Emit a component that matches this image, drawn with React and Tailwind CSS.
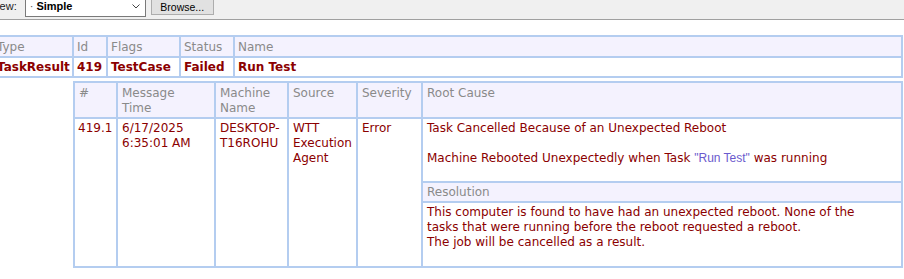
import React from "react";

const line = "bg-[#b4cdf0]";
const head = "bg-[#f4f2fe] text-[#8a8a8a]";
const cell = "bg-white text-[#8b0000]";

const taskHeaders = ["Type", "Id", "Flags", "Status", "Name"];
const taskValues = ["TaskResult", "419", "TestCase", "Failed", "Run Test"];

const msgHeaders = ["#", ["Message", "Time"], ["Machine", "Name"], "Source", "Severity", "Root Cause"];

const App = () => {
  return (
    <div className="w-[904px] h-[279px] overflow-hidden bg-white">
      {/* toolbar */}
      <div className="h-[20px] flex items-start bg-[#f0f0f0] border-b border-[#a0a0a0] font-['Liberation_Sans',Arial,sans-serif]">
        <div className="flex items-start -mt-[5px]">
          <span className="-ml-[10px] mt-[4px] text-[11px] leading-[14px] text-[#222]">View:</span>
          <div className="ml-[8px] w-[121px] h-[22px] bg-white border border-[#7a7a7a] flex items-center justify-between pl-[4px] pr-[5px]">
            <span className="text-[11px] font-bold text-black">
              <span className="font-normal text-[#555] mr-[3px]">·</span>Simple
            </span>
            <svg width="8" height="5" viewBox="0 0 8 5" className="mt-[1px]">
              <path d="M0.5 0.5 L4 4 L7.5 0.5" fill="none" stroke="#444" strokeWidth="1" />
            </svg>
          </div>
          <button
            type="button"
            className="ml-[5px] w-[63px] h-[20px] pt-[3px] bg-[#e1e1e1] border border-[#adadad] text-[10.5px] leading-[14px] text-black"
          >
            Browse...
          </button>
        </div>
      </div>

      <div className="font-['DejaVu_Sans',Verdana,sans-serif] text-[12px] leading-[15px]">
        {/* task table */}
        <div className={`mt-[15px] -ml-[8px] w-[911px] grid grid-cols-[78px_32px_71px_52px_666px] gap-[2px] p-[2px] ${line}`}>
          {taskHeaders.map((h) => (
            <div key={h} className={`${head} pl-[3px] pt-[3px] pb-[1px] whitespace-nowrap`}>
              {h}
            </div>
          ))}
          {taskValues.map((v) => (
            <div key={v} className={`${cell} font-bold pl-[3px] pt-[2px] pb-[1px] whitespace-nowrap`}>
              {v}
            </div>
          ))}
        </div>

        {/* message table */}
        <div className={`mt-[3px] ml-[73px] w-[830px] grid grid-cols-[41px_96px_71px_67px_63px_478px] gap-[2px] p-[2px] ${line}`}>
          {msgHeaders.map((h, i) => (
            <div key={i} className={`${head} pl-[4px] pt-[3px] pb-[1px]`}>
              {Array.isArray(h) ? (
                <>
                  {h[0]}
                  <br />
                  {h[1]}
                </>
              ) : (
                h
              )}
            </div>
          ))}

          <div className={`${cell} pl-[3px] pt-[2px]`}>419.1</div>
          <div className={`${cell} pl-[4px] pt-[2px]`}>
            6/17/2025
            <br />
            6:35:01 AM
          </div>
          <div className={`${cell} pl-[4px] pt-[2px]`}>
            DESKTOP-
            <br />
            T16ROHU
          </div>
          <div className={`${cell} pl-[4px] pt-[2px]`}>
            WTT
            <br />
            Execution
            <br />
            Agent
          </div>
          <div className={`${cell} pl-[4px] pt-[2px]`}>Error</div>

          <div className={`flex flex-col gap-[2px] ${line}`}>
            <div className={`${cell} pl-[4px] pt-[2px] h-[62px]`}>
              Task Cancelled Because of an Unexpected Reboot
              <br />
              <br />
              Machine Rebooted Unexpectedly when Task{" "}
              <span className="font-['Liberation_Sans',Arial,sans-serif] text-[#6a5acd]">"Run Test"</span> was
              running
            </div>
            <div className={`${head} pl-[4px] pt-[2px] pb-[1px]`}>Resolution</div>
            <div className={`${cell} pl-[4px] pt-[2px] h-[63px]`}>
              This computer is found to have had an unexpected reboot. None of the
              <br />
              tasks that were running before the reboot requested a reboot.
              <br />
              The job will be cancelled as a result.
            </div>
          </div>
        </div>
      </div>
    </div>
  );
};

export default App;
